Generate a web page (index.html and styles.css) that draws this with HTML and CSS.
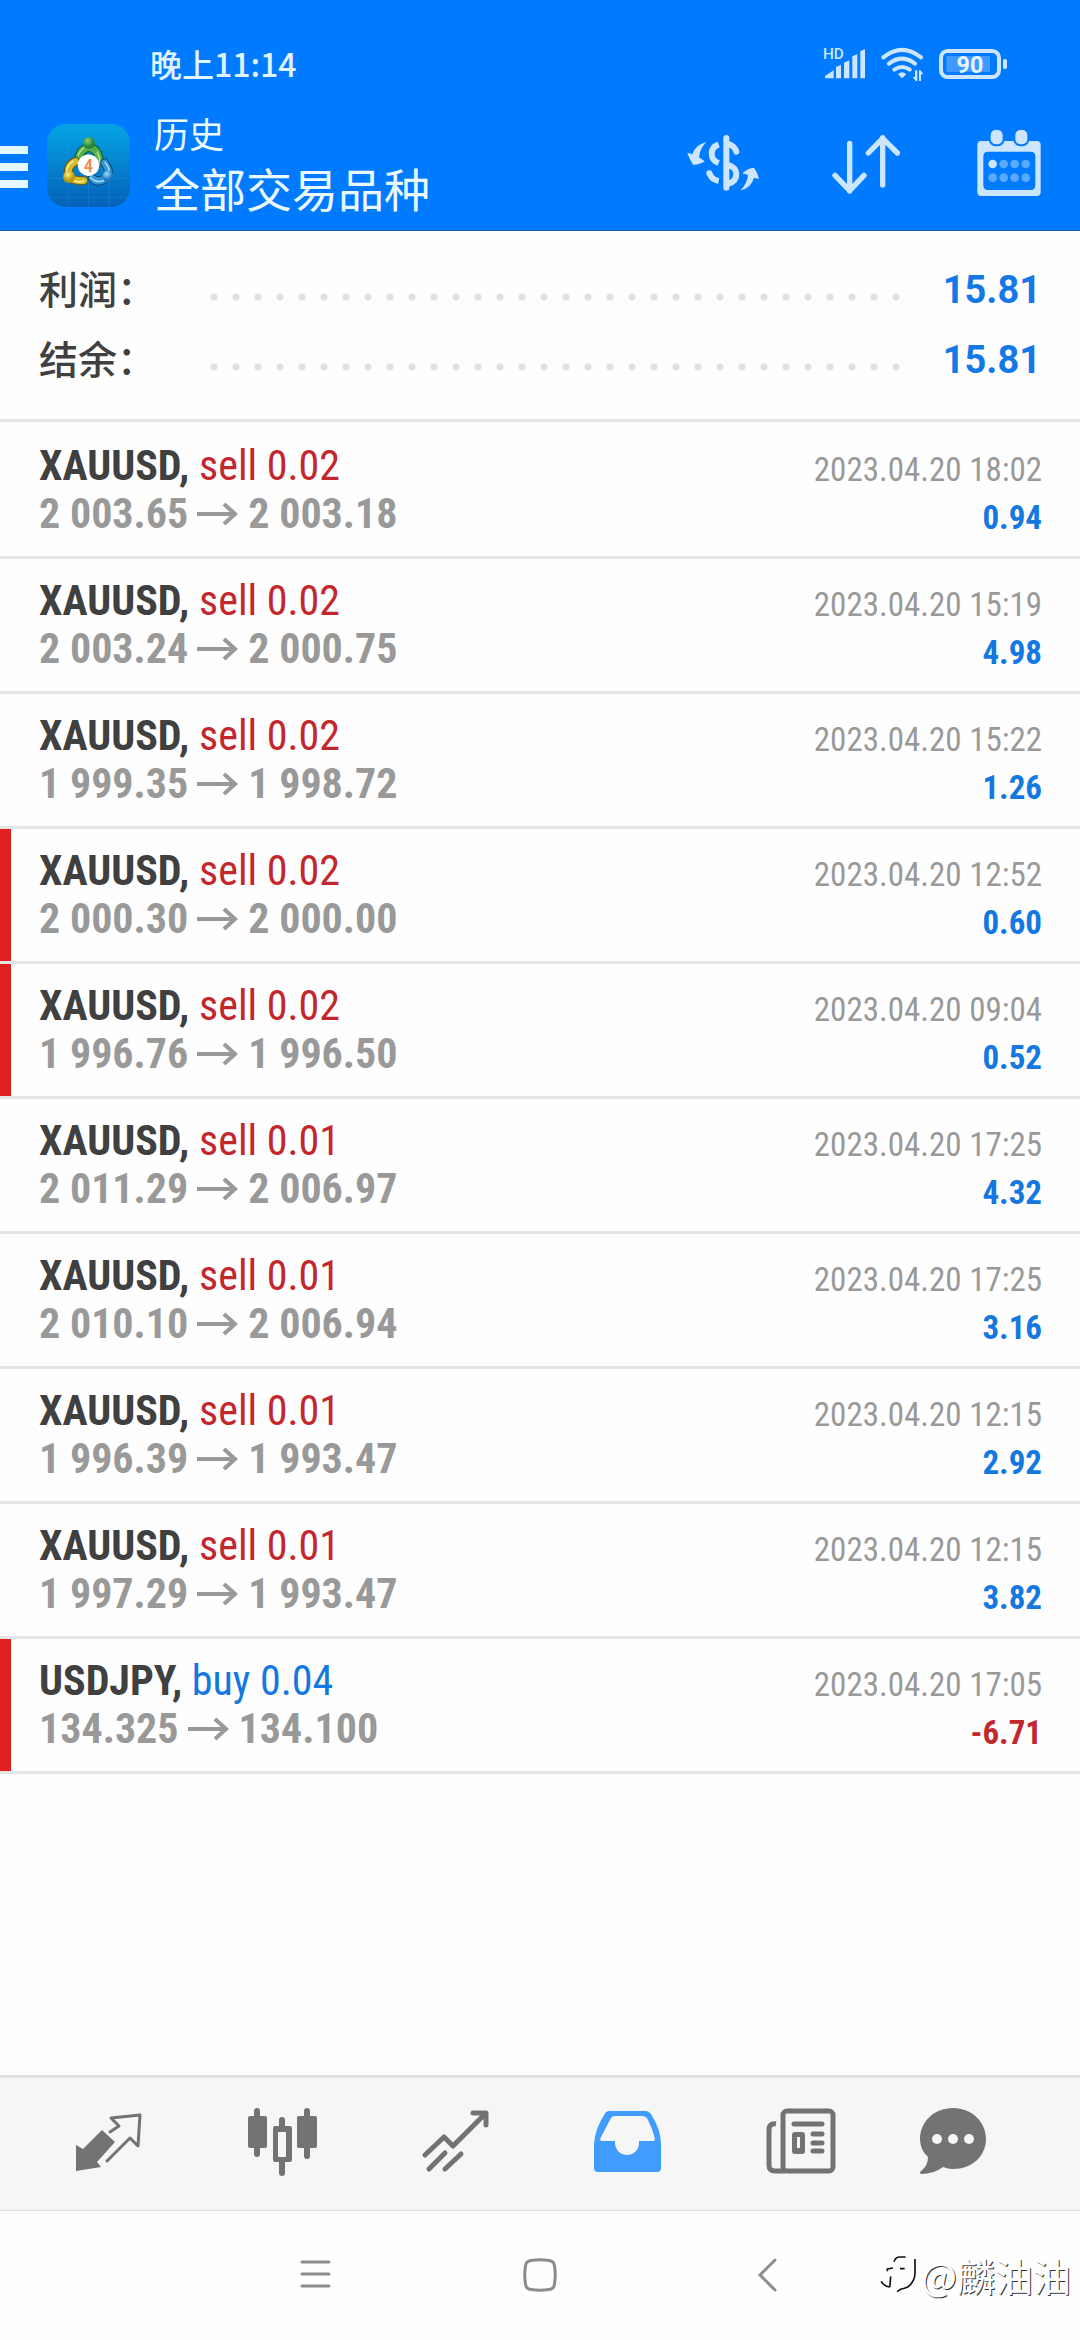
FILE: index.html
```html
<!DOCTYPE html>
<html lang="zh-CN">
<head>
<meta charset="utf-8">
<meta name="viewport" content="width=device-width">
<title>历史</title>
<link rel="stylesheet" href="styles.css">
</head>
<body>
<header class="header">
  <div class="status">
    <span class="clock">晚上11:14</span>
    <div class="indicators">
      <svg class="signal" width="42" height="34" viewBox="546 80 126 102"><text class="hd" x="546" y="116">HD</text><path d="M552 174V167L578 150V174ZM585 174V140L600 133V174ZM609 174V127L625 120V174ZM634 174V108L649 101V174ZM658 174V93L672 86V174Z"/></svg>
      <svg width="42" height="34" viewBox="720 84 126 102"><g class="line w12"><path d="M727 115Q783 70 840 115M744 134Q783 104 822 134M760 152Q783 136 806 152"/></g><path d="M771 166Q783 154 796 166L783 178ZM822 154h7v32h-5l-9-12h7zM834 186v-32h5l8 12h-7v20z"/></svg>
      <svg width="68" height="30" viewBox="894 87 204 90"><rect class="line w12" x="900" y="93" width="174" height="78" rx="20"/><rect class="level" x="916" y="108" width="131" height="48"/><rect x="1086" y="117" width="12" height="30" rx="5"/><text class="charge" x="987" y="158">90</text></svg>
    </div>
  </div>
  <div class="appbar">
    <button class="menu" aria-label="菜单"><svg width="28" height="42" viewBox="0 0 28 42"><path d="M0 0h28v8H0zM0 17h28v8H0zM0 34h28v8H0z"/></svg></button>
    <svg class="logo" width="83" height="83" viewBox="50 41 248 248">
      <defs>
        <linearGradient id="tile" x1="0" y1="0" x2="0" y2="1"><stop offset="0" stop-color="#04a4e4"/><stop offset="1" stop-color="#0560b8"/></linearGradient>
        <radialGradient id="green" cx=".4" cy=".3"><stop offset="0" stop-color="#8fd27c"/><stop offset="1" stop-color="#2b8438"/></radialGradient>
        <radialGradient id="gold" cx=".4" cy=".3"><stop offset="0" stop-color="#fff07a"/><stop offset="1" stop-color="#b8980e"/></radialGradient>
        <radialGradient id="sky" cx=".4" cy=".3"><stop offset="0" stop-color="#9bdcf8"/><stop offset="1" stop-color="#1d78bd"/></radialGradient>
      </defs>
      <rect x="50" y="41" width="248" height="248" rx="56" fill="url(#tile)"/>
      <path class="grid" d="M112 42V288M174 42V288M236 42V288M51 92H297M51 148H297M51 204H297M51 260H297"/>
      <g fill="none" stroke-linecap="round">
        <path stroke="#12603a" stroke-width="27" d="M145 140Q152 114 176 111Q206 116 206 155"/>
        <path stroke="#55ae4d" stroke-width="20" d="M145 140Q152 114 176 111Q206 116 206 155"/>
        <path stroke="#b8e79b" stroke-width="4" d="M143 135Q152 110 174 107M200 125Q208 138 208 155"/>
        <path stroke="#625f20" stroke-width="27" d="M135 153Q108 165 116 198Q128 212 160 210"/>
        <path stroke="#d6bd2d" stroke-width="20" d="M135 153Q108 165 116 198Q128 212 160 210"/>
        <path stroke="#fff2a0" stroke-width="4" d="M128 152Q110 164 109 182M132 211Q146 217 160 212"/>
        <path stroke="#0c4b82" stroke-width="27" d="M185 203Q205 222 231 198Q239 180 222 157"/>
        <path stroke="#3496d2" stroke-width="20" d="M185 203Q205 222 231 198Q239 180 222 157"/>
        <path stroke="#b3e4fa" stroke-width="4" d="M180 201Q200 221 224 208M236 183Q235 169 223 155"/>
      </g>
      <circle cx="175" cy="98" r="18" fill="url(#green)"/><circle cx="116" cy="199" r="18" fill="url(#gold)"/><circle cx="232" cy="197" r="17" fill="url(#sky)"/>
      <circle cx="174" cy="164" r="32" fill="#fff"/><text class="four" x="174" y="184">4</text>
    </svg>
    <div class="titles"><p class="screen">历史</p><h1 class="filter">全部交易品种</h1></div>
    <div class="actions">
      <button aria-label="币种"><svg width="72" height="66" viewBox="137 331 216 198"><g class="line w18"><path d="M255 355V504M262 373Q280 379 285 396M262 436Q285 444 285 464Q285 485 262 492"/></g><g class="line w18 butt"><path d="M232 374Q211 382 211 402Q211 422 232 430M232 484Q211 480 205 462"/></g><circle cx="204" cy="461" r="9"/><path d="M195 367Q163 374 153 404L138 399Q145 420 155 435Q174 436 190 425L173 413Q176 386 195 367ZM298 512Q330 504 338 474L353 478Q350 460 338 444Q318 446 303 461L320 466Q318 490 298 512Z"/></svg></button>
      <button aria-label="排序"><svg width="72" height="66" viewBox="567 331 216 198"><path class="line w16" d="M626 371V514M582 467L626 513L669 467M725 496V354M682 400L725 356L769 400"/></svg></button>
      <button aria-label="日期"><svg width="72" height="66" viewBox="997 331 216 198"><path fill-rule="evenodd" d="M1022 364H1188Q1200 364 1200 376V517Q1200 529 1188 529H1022Q1010 529 1010 517V376Q1010 364 1022 364ZM1042 396Q1028 396 1028 410V497Q1028 511 1042 511H1170Q1184 511 1184 497V410Q1184 396 1170 396Z"/><g class="ring"><rect x="1047" y="328" width="42" height="49" rx="18"/><rect x="1121" y="328" width="42" height="49" rx="18"/></g><circle cx="1056" cy="433" r="13"/><g class="faint"><circle cx="1089" cy="433" r="13"/><circle cx="1122" cy="433" r="13"/><circle cx="1155" cy="433" r="13"/><circle cx="1056" cy="474" r="13"/><circle cx="1089" cy="474" r="13"/><circle cx="1122" cy="474" r="13"/><circle cx="1155" cy="474" r="13"/></g></svg></button>
    </div>
  </div>
</header>

<main class="main">
  <dl class="summary">
    <div class="total"><dt>利润：</dt><span class="dots"></span><dd>15.81</dd></div>
    <div class="total"><dt>结余：</dt><span class="dots"></span><dd>15.81</dd></div>
  </dl>
  <svg class="defs" width="0" height="0"><symbol id="to" viewBox="0 0 42 24"><path d="M0 12H39M27 2L38 12L27 22" fill="none" stroke="currentColor" stroke-width="4"/></symbol></svg>
  <ul class="deals">
    <li class="deal"><div><p class="name">XAUUSD, <span class="sell">sell 0.02</span></p><p class="price">2 003.65<svg class="to"><use href="#to"/></svg>2 003.18</p></div><div class="side"><time>2023.04.20 18:02</time><p class="gain">0.94</p></div></li>
    <li class="deal"><div><p class="name">XAUUSD, <span class="sell">sell 0.02</span></p><p class="price">2 003.24<svg class="to"><use href="#to"/></svg>2 000.75</p></div><div class="side"><time>2023.04.20 15:19</time><p class="gain">4.98</p></div></li>
    <li class="deal"><div><p class="name">XAUUSD, <span class="sell">sell 0.02</span></p><p class="price">1 999.35<svg class="to"><use href="#to"/></svg>1 998.72</p></div><div class="side"><time>2023.04.20 15:22</time><p class="gain">1.26</p></div></li>
    <li class="deal marked"><div><p class="name">XAUUSD, <span class="sell">sell 0.02</span></p><p class="price">2 000.30<svg class="to"><use href="#to"/></svg>2 000.00</p></div><div class="side"><time>2023.04.20 12:52</time><p class="gain">0.60</p></div></li>
    <li class="deal marked"><div><p class="name">XAUUSD, <span class="sell">sell 0.02</span></p><p class="price">1 996.76<svg class="to"><use href="#to"/></svg>1 996.50</p></div><div class="side"><time>2023.04.20 09:04</time><p class="gain">0.52</p></div></li>
    <li class="deal"><div><p class="name">XAUUSD, <span class="sell">sell 0.01</span></p><p class="price">2 011.29<svg class="to"><use href="#to"/></svg>2 006.97</p></div><div class="side"><time>2023.04.20 17:25</time><p class="gain">4.32</p></div></li>
    <li class="deal"><div><p class="name">XAUUSD, <span class="sell">sell 0.01</span></p><p class="price">2 010.10<svg class="to"><use href="#to"/></svg>2 006.94</p></div><div class="side"><time>2023.04.20 17:25</time><p class="gain">3.16</p></div></li>
    <li class="deal"><div><p class="name">XAUUSD, <span class="sell">sell 0.01</span></p><p class="price">1 996.39<svg class="to"><use href="#to"/></svg>1 993.47</p></div><div class="side"><time>2023.04.20 12:15</time><p class="gain">2.92</p></div></li>
    <li class="deal"><div><p class="name">XAUUSD, <span class="sell">sell 0.01</span></p><p class="price">1 997.29<svg class="to"><use href="#to"/></svg>1 993.47</p></div><div class="side"><time>2023.04.20 12:15</time><p class="gain">3.82</p></div></li>
    <li class="deal marked"><div><p class="name">USDJPY, <span class="buy">buy 0.04</span></p><p class="price">134.325<svg class="to"><use href="#to"/></svg>134.100</p></div><div class="side"><time>2023.04.20 17:05</time><p class="loss">-6.71</p></div></li>
  </ul>
</main>

<nav class="tabs">
  <button aria-label="行情"><svg viewBox="0 0 72 72"><path class="line w3" d="M37 26L46 20L38 12L67 9L65 40L57 32L34 55"/><path d="M29 24L42 36L24 56L28 61L3 65V39L10 43Z"/></svg></button>
  <button aria-label="图表"><svg viewBox="0 0 72 72"><path class="line w6" d="M11 5V48M36 14V67M61 5V50"/><rect x="2" y="10" width="19" height="32" rx="2"/><rect x="51" y="10" width="20" height="32" rx="2"/><rect x="27" y="20" width="19" height="36" rx="2"/><rect class="hole" x="32" y="26" width="8" height="25" rx="1"/></svg></button>
  <button aria-label="交易"><svg viewBox="0 0 72 72"><path class="line w5" d="M6 49L25 31L34 40L66 8M54 7H67V19M10 63L26 47M26 63L42 48"/></svg></button>
  <button class="current" aria-label="历史" aria-current="page"><svg viewBox="0 0 72 72"><path fill-rule="evenodd" d="M14 6Q16 5 18 5H54Q57 5 59 8Q69 24 69 38V62Q69 66 65 66H6Q2 66 2 62V38Q3 22 14 6ZM19 12Q20 10 23 10H50Q54 10 56 14Q61 24 63 33Q63 35 61 35H47V38C46 52 25 53 23 38V35H10Q8 35 8 33Z"/></svg></button>
  <button aria-label="新闻"><svg viewBox="0 0 72 72"><rect class="line w5" x="18" y="5" width="50" height="60" rx="4"/><path class="line w5 butt" d="M11 18Q4 17 4 24V59Q4 65 10 65H20"/><path class="line w5" d="M29 18H57M48 28H57M48 37H57M48 45H57"/><rect x="27" y="26" width="13" height="22" rx="3"/><rect class="hole" x="32" y="31" width="3" height="11"/></svg></button>
  <button aria-label="消息"><svg viewBox="0 0 72 72"><path d="M37 2C56 2 70 16 70 33C70 50 56 63 37 63Q32 63 27 61Q18 68 5 68Q3 67 5 65Q12 60 12 51Q4 44 4 33C4 16 18 2 37 2Z"/><g class="hole"><circle cx="21" cy="33" r="5"/><circle cx="37" cy="33" r="5"/><circle cx="53" cy="33" r="5"/></g></svg></button>
</nav>

<footer class="system">
  <button aria-label="最近任务"><svg viewBox="0 0 34 34"><path d="M4 4H31M4 16H31M4 28H31"/></svg></button>
  <button aria-label="主屏幕"><svg viewBox="0 0 34 34"><path d="M8 2.500Q17 1 26 2.500Q31 3 31.500 8Q33 17 31.500 26Q31 31 26 31.500Q17 33 8 31.500Q3 31 2.500 26Q1 17 2.500 8Q3 3 8 2.500Z"/></svg></button>
  <button aria-label="返回"><svg viewBox="0 0 34 34"><path d="M27 2L12 17L27 32"/></svg></button>
  <div class="watermark"><svg width="42" height="44" viewBox="30 72 126 132"><path d="M75 98Q79 84 93 84H110M55 127V120L72 117M93 119H107M65 142Q64 160 62 175M36 157Q44 170 60 174M138 90V128Q139 158 116 174Q103 180 96 180L84 188"/></svg><span>@麟油油</span></div>
</footer>
</body>
</html>
```
FILE: styles.css
```css
* { box-sizing: border-box; }
body, p, h1, ul, dl, dd { margin: 0; padding: 0; }
body {
  min-height: 100vh;
  display: flex;
  flex-direction: column;
  background: #fefefe;
  color: #404040;
  font-family: "Roboto Condensed", "Liberation Sans Narrow", Roboto, "Noto Sans CJK SC", sans-serif;
}
button { display: flex; align-items: center; justify-content: center; margin: 0; padding: 0; border: 0; background: none; color: inherit; }
svg { display: block; flex: none; fill: currentColor; }
.line { fill: none; stroke: currentColor; stroke-linecap: round; stroke-linejoin: round; }
.butt { stroke-linecap: butt; }
.w3 { stroke-width: 3; }
.w5 { stroke-width: 5; }
.w6 { stroke-width: 6; }
.w12 { stroke-width: 12; }
.w16 { stroke-width: 16; }
.w18 { stroke-width: 18; }

.header { background: #007aff; color: #cce6ff; border-bottom: 1px solid #1a64a8; font-family: "Noto Sans CJK SC", sans-serif; }
.status { height: 86px; padding: 41px 73px 0 150px; display: flex; justify-content: space-between; }
.clock { font-size: 32px; line-height: 44px; font-weight: 500; color: #e0f4ff; }
.indicators { display: flex; gap: 16px; align-items: center; height: 46px; }
.signal { overflow: visible; }
.hd { font: 500 46px Roboto, sans-serif; }
.charge { font: 700 70px Roboto, sans-serif; fill: #e6f6ff; text-anchor: middle; }
.level { opacity: .3; }
.appbar { height: 144px; padding-right: 35px; display: flex; align-items: flex-start; }
.menu { color: #e6f8ff; margin-top: 60px; }
.logo { margin: 38px 24px 0 19px; }
.grid { fill: none; stroke: #27a8e6; stroke-width: 2; opacity: .35; }
.four { font: 500 56px "Roboto Condensed", Roboto, sans-serif; fill: #ee8a48; text-anchor: middle; }
.titles { flex: 1; color: #ecfaff; padding-top: 23px; }
.screen { font-size: 35px; line-height: 48px; }
.filter { font-size: 46px; line-height: 60px; font-weight: 400; }
.actions { display: flex; gap: 71px; padding-top: 44px; }
.ring { stroke: #007aff; stroke-width: 6; }
.faint { fill: #59aaff; }

.main { flex: 1; }
.summary { padding: 24px 39px 24px; border-bottom: 3px solid #e4e4e4; }
.total { display: flex; align-items: center; height: 70px; }
.total dt { width: 164px; padding-bottom: 6px; font: 500 39px/56px "Noto Sans CJK SC", sans-serif; }
.total dd { margin-left: 41px; font: 700 38px Roboto, sans-serif; color: #1478e6; }
.dots { flex: 1; height: 8px; margin-top: 14px; background: radial-gradient(circle, #e0e0e0 3px, transparent 4px) 0 0 / 22px 8px repeat-x; }
.defs { position: absolute; }
.deals { list-style: none; padding-top: 2px; }
.deal { display: flex; justify-content: space-between; padding: 18px 38px 14px 39px; border-bottom: 3px solid #e4e4e4; line-height: 48px; position: relative; }
.marked::before { content: ""; position: absolute; left: 0; top: 0; bottom: 0; width: 11px; background: #e02020; }
.name, .price { font-size: 42px; font-weight: 700; }
.name span { font-weight: 400; }
.price { display: flex; align-items: center; gap: 9px; color: #999; }
.to { width: 42px; height: 24px; }
.side { padding-top: 4px; text-align: right; font-size: 33px; }
.side time { display: block; color: #999; }
.side p { font-weight: 700; }
.buy, .gain { color: #1478e0; }
.sell, .loss { color: #c1272d; }

.tabs { display: grid; grid-template-columns: repeat(5, 173fr) 130fr; padding: 28px 63px 0 22px; height: 136px; align-items: start; background: #f6f6f6; color: #737373; border-top: 3px solid #e0e0e0; border-bottom: 1px solid #dedede; }
.tabs svg { width: 72px; height: 72px; }
.current { color: #409cff; }
.hole { fill: #f6f6f6; }

.system { position: relative; height: 129px; padding-top: 47px; display: flex; justify-content: center; gap: 191px; align-items: flex-start; }
.system button svg { width: 34px; height: 34px; fill: none; stroke: #8c8c8c; stroke-width: 3; stroke-linecap: round; }
.watermark { position: absolute; right: 9px; top: 34px; display: flex; align-items: center; color: #fff; font: 400 38px/60px "Noto Sans CJK SC", sans-serif; text-shadow: 1px 1px 0 #333; }
.watermark svg { fill: none; stroke: #111; stroke-width: 5; }
```
